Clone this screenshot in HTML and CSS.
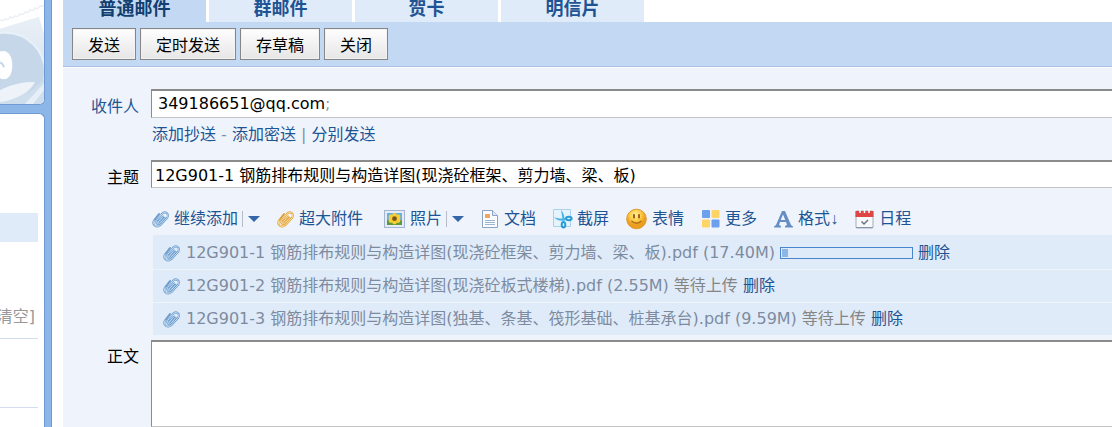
FILE: index.html
```html
<!DOCTYPE html>
<html lang="zh-CN">
<head>
<meta charset="utf-8">
<title>写邮件</title>
<link rel="stylesheet" href="styles.css">
</head>
<body>
<svg class="defs" aria-hidden="true">
  <symbol id="clip" viewBox="0 0 18 18">
    <g fill="none" stroke-linecap="round" stroke-linejoin="round">
      <path class="clip-back" d="M6.500 11.500 L11.200 6.500 M12.500 8 L8.500 12.800 C6 15.500 3 13 4.800 10.300 L9.800 4 C13 .5 17.300 3.500 15.300 7.500 L8.500 15 C4.500 18.500 -.3 15 2 10.500 L7 4"/>
      <path class="clip-front" d="M6.500 11.500 L11.200 6.500 M12.500 8 L8.500 12.800 C6 15.500 3 13 4.800 10.300 L9.800 4 C13 .5 17.300 3.500 15.300 7.500 L8.500 15 C4.500 18.500 -.3 15 2 10.500"/>
    </g>
  </symbol>
</svg>
<div class="app">
  <aside class="sidebar">
    <div class="panel art">
      <svg viewBox="0 0 44 105" preserveAspectRatio="none" aria-hidden="true">
        <defs><linearGradient id="sky" x1="0" y1="0" x2="0" y2="1"><stop offset="0" stop-color="#e9eff6"/><stop offset="1" stop-color="#d3e0ee"/></linearGradient></defs>
        <rect width="44" height="105" fill="#fff"/>
        <path d="M0 29 L39 17 L44 34 V105 H0Z" fill="url(#sky)"/>
        <path d="M0 20 q3 2 5 -1 q3 2 5 -2 q3 2 5 -1 q3 2 5 -2 q3 2 5 -2 q3 2 5 -2 q3 2 5 -2 q3 2 5 -2 q2 1 4 -1" fill="none" stroke="#eceff3" stroke-width="1.500"/>
        <circle cx="5" cy="73" r="40" fill="#c6d7e9" stroke="#e8f0f8" stroke-width="2"/>
        <path d="M0 52 C8 49 14 58 12 70 C11 79 5 82 0 79" fill="#fff"/>
        <path d="M0 63 q3 1 4 5" fill="none" stroke="#c6d7e9" stroke-width="2"/>
        <path d="M0 93 C14 84 24 82 35 83 L27 96 L44 80 V105 H0Z" fill="#cfdeed"/>
        <path d="M0 103 C14 101 28 95 35 83 C23 82 10 86 0 91Z" fill="#edf3f9"/>
        <path d="M25 105 L44 84 V91 L33 105Z" fill="#e6eef7"/>
      </svg>
    </div>
    <div class="panel folders">
      <div class="folder-active"></div>
      <a class="clear" href="#">[清空]</a>
      <hr>
      <hr class="second">
    </div>
  </aside>
  <main class="main">
    <nav class="tabs">
      <a class="tab active" href="#">普通邮件</a>
      <a class="tab" href="#">群邮件</a>
      <a class="tab" href="#">贺卡</a>
      <a class="tab" href="#">明信片</a>
    </nav>
    <div class="actions">
      <button type="button">发送</button>
      <button type="button">定时发送</button>
      <button type="button">存草稿</button>
      <button type="button">关闭</button>
    </div>
    <form class="compose">
      <label class="label link" for="to">收件人</label>
      <div class="field to"><input id="to" class="address" value="349186651@qq.com"><span class="semi">;</span></div>
      <div class="extras"><a href="#">添加抄送</a> - <a href="#">添加密送</a> | <a href="#">分别发送</a></div>
      <label class="label" for="subject">主题</label>
      <input id="subject" class="field subject" value="12G901-1 钢筋排布规则与构造详图(现浇砼框架、剪力墙、梁、板)">
      <div class="tools">
        <div class="tool"><svg class="i18" viewBox="0 0 18 18"><use href="#clip"/></svg><a href="#">继续添加</a><button class="drop" type="button" aria-label="更多添加方式"></button></div>
        <div class="tool"><svg class="i18 gold" viewBox="0 0 18 18"><use href="#clip"/></svg><a href="#">超大附件</a></div>
        <div class="tool photo">
          <svg class="i22" viewBox="0 0 22 20"><rect x=".5" y="1.500" width="20" height="17" fill="#e4ebf6" stroke="#a3b5d1"/><rect x="3" y="4" width="15" height="12" fill="#6bb0dc"/><path d="M3 11 h15 v5 h-15z" fill="#5a9a3c"/><g fill="#f8ce35"><circle cx="10.500" cy="6.500" r="2.400"/><circle cx="14" cy="8" r="2.400"/><circle cx="14" cy="11.500" r="2.400"/><circle cx="10.500" cy="13" r="2.400"/><circle cx="7" cy="11.500" r="2.400"/><circle cx="7" cy="8" r="2.400"/></g><circle cx="10.500" cy="9.700" r="2.400" fill="#7d5518"/></svg>
          <a href="#">照片</a><button class="drop" type="button" aria-label="更多照片选项"></button></div>
        <div class="tool">
          <svg class="i19" viewBox="0 0 19 20"><path d="M1.500 1.500 h10 l5 5 v12 h-15z" fill="#fafcff" stroke="#8da3c4"/><path d="M11.500 1.500 v5 h5" fill="#dce6f4" stroke="#8da3c4"/><rect x="4" y="5" width="5" height="4" fill="#f1a45c"/><path d="M4 11.500h10M4 13.500h10M4 15.500h10" stroke="#9db4d3"/></svg>
          <a href="#">文档</a></div>
        <div class="tool">
          <svg class="i20" viewBox="0 0 20 20"><path d="M.5 .5h17v17h-17z" fill="#e4f3fc" stroke="#a9d2ec"/><path d="M8 1 C10 3 11.500 6 11.500 11 L9.500 11 C9.500 8 8.500 5 8 1Z M1 8 C4 9.500 8 10 12 9 L12 11.500 C7 12.500 3 11 1 8Z" fill="#48b4e6"/><g fill="none" stroke="#279bd5" stroke-width="2"><ellipse cx="15.800" cy="9.500" rx="2.800" ry="1.800"/><ellipse cx="10.500" cy="15.800" rx="1.800" ry="2.800"/></g></svg>
          <a href="#">截屏</a></div>
        <div class="tool">
          <svg class="i22" viewBox="0 0 22 22"><defs><radialGradient id="face" cx=".45" cy=".3"><stop offset="0" stop-color="#fff09a"/><stop offset=".6" stop-color="#fbcb44"/><stop offset="1" stop-color="#ec9e20"/></radialGradient></defs><circle cx="10.500" cy="11" r="9.800" fill="url(#face)" stroke="#dd9830"/><path d="M8 7v2.500M13 7v2.500" stroke="#a0601a" stroke-width="2" stroke-linecap="round"/><path d="M5.500 13q5 4.500 10 0" fill="none" stroke="#b26d1c" stroke-width="1.500"/></svg>
          <a href="#">表情</a></div>
        <div class="tool">
          <svg class="i20" viewBox="0 0 20 20"><rect x="1" y="1" width="8" height="8" rx="1" fill="#6c9fee"/><rect x="10.500" y="1" width="8" height="8" rx="1" fill="#ffd466"/><rect x="1" y="10.500" width="8" height="8" rx="1" fill="#ffd466"/><rect x="10.500" y="10.500" width="8" height="8" rx="1" fill="#6c9fee"/></svg>
          <a href="#">更多</a></div>
        <div class="tool">
          <svg class="i20" viewBox="0 0 20 20"><path d="M0 17.500 L2 16 L8 2 H11 L17 16 L19 17.500 V18.500 H11 V17 L13 16 L12 13 H6 L5 16 L7 17 V18.500 H0Z M6.700 11 H11.300 L9 5.500Z" fill="#658fc4" fill-rule="evenodd"/></svg>
          <a href="#">格式<span class="arrow">↓</span></a></div>
        <div class="tool">
          <svg class="i20" viewBox="0 0 20 20"><rect x="1" y="2" width="17" height="17" rx="1" fill="#f7f8fa" stroke="#a5adba"/><path d="M.5 2h18v6h-18z" fill="#df4545"/><path d="M5 0v4M9.500 0v4M14 0v4" stroke="#fff" stroke-width="1.500"/><path d="M1 18.500h17" stroke="#8795ac"/><path d="M6.500 12.500 l2.500 2.500 l4 -4" fill="none" stroke="#67758b" stroke-width="1.500"/></svg>
          <a href="#">日程</a></div>
      </div>
      <ul class="files">
        <li><svg class="i18" viewBox="0 0 18 18"><use href="#clip"/></svg><span>12G901-1 钢筋排布规则与构造详图(现浇砼框架、剪力墙、梁、板).pdf (17.40M)</span><span class="progress" role="progressbar" aria-valuenow="5"><i style="width:5%"></i></span><a href="#">删除</a></li>
        <li><svg class="i18" viewBox="0 0 18 18"><use href="#clip"/></svg><span>12G901-2 钢筋排布规则与构造详图(现浇砼板式楼梯).pdf (2.55M)</span><span class="wait">等待上传</span><a href="#">删除</a></li>
        <li><svg class="i18" viewBox="0 0 18 18"><use href="#clip"/></svg><span>12G901-3 钢筋排布规则与构造详图(独基、条基、筏形基础、桩基承台).pdf (9.59M)</span><span class="wait">等待上传</span><a href="#">删除</a></li>
      </ul>
      <label class="label body-label" for="body">正文</label>
      <textarea id="body" class="field body"></textarea>
    </form>
  </main>
</div>
</body>
</html>
```

FILE: styles.css
```css
* { box-sizing: border-box; }
body { margin: 0; overflow: hidden; background: #fff; color: #000; font: 16px/20px "DejaVu Sans", "Noto Sans CJK SC", sans-serif; }
input, textarea, button { font: inherit; color: inherit; }
a { color: #1e5494; text-decoration: none; }
.defs { display: none; }
.app { display: flex; height: 100vh; }

.sidebar { width: 52px; flex: none; display: flex; flex-direction: column; gap: 8px; padding-right: 6px; background: #8cb5e8; border-right: 1px solid #7298cc; }
.panel { background: #fff; border-right: 1px solid #6f9ad3; overflow: hidden; }
.art { height: 105px; flex: none; border-bottom: 1px solid #6f9ad3; border-radius: 0 0 6px 0; }
.art svg { display: block; width: 100%; height: 100%; }
.folders { flex: 1; border-top: 1px solid #6f9ad3; border-radius: 0 6px 0 0; padding: 99px 6px 0 0; }
.folder-active { height: 29px; background: #e0ebf9; }
.clear { display: flex; justify-content: flex-end; margin: 65px 3px 11px 0; color: #999; white-space: nowrap; }
.folders hr { margin: 0; border: 0; border-top: 1px solid #d4dded; }
.folders .second { margin-top: 68px; }

.main { flex: 1; min-width: 0; margin-left: 11px; display: flex; flex-direction: column; background: #eff4fc; }
.tabs { display: flex; gap: 3px; height: 22px; background: #fff; }
.tab { width: 143px; background: #e0ebf9; text-align: center; font-size: 18px; font-weight: bold; line-height: 18px; }
.tab.active { background: #c3d9f3; color: #123e70; }
.actions { display: flex; gap: 4px; padding: 6px 9px; background: #c3d9f3; border-bottom: 1px solid #a9c2e4; box-shadow: 0 1px #fff; }
.actions button { height: 32px; padding: 4px 15px 0; border: 1px solid #868686; border-radius: 0; background: linear-gradient(#fefefe, #e6e6e6); box-shadow: inset 0 0 0 1px #f2f2f2; white-space: nowrap; }

.compose { flex: 1; display: grid; grid-template-columns: 76px minmax(0, 1fr); grid-template-rows: auto auto auto auto auto 1fr; column-gap: 12px; padding-top: 22px; }
.label { padding-top: 8px; text-align: right; }
.link { color: #1e5494; }
.field { width: 100%; height: 29px; background: #fff; border: 1px solid #c3c3c3; border-top: 2px solid #8b8b8b; border-left-color: #8b8b8b; border-right: 0; border-radius: 0; outline: 0; }
.to { display: flex; align-items: center; padding: 0 6px; }
.address { width: 167px; padding: 0; border: 0; outline: 0; }
.semi { color: #999; }
.extras { grid-column: 2; padding: 7px 0 15px 1px; color: #8291a9; }
.subject { height: 28px; padding: 0 3px 2px; }
.tools { grid-column: 2; display: flex; align-items: center; gap: 17px; height: 47px; padding: 14px 0 0 1px; white-space: nowrap; }
.tool { display: flex; align-items: center; gap: 4px; flex: none; }
.photo { margin-left: 4px; }
.arrow { font-family: "Liberation Sans", sans-serif; }
.drop { width: 18px; height: 16px; padding: 0 0 0 5px; border: 0; border-left: 1px solid #b5bdca; background: none; }
.drop::before { content: ""; display: block; border: 6px solid transparent; border-top-color: #3566aa; border-bottom: 0; }
.i18 { width: 18px; height: 18px; flex: none; }
.i19 { width: 19px; height: 20px; flex: none; }
.i20 { width: 20px; height: 20px; flex: none; }
.i22 { width: 22px; height: 22px; flex: none; }
.clip-back { stroke: var(--clip, #6a9bcc); stroke-width: 2; }
.clip-front { stroke: var(--shine, #c2dcf2); stroke-width: 1; }
.gold { --clip: #e0a03a; --shine: #ffe2a0; }
.files { grid-column: 2; display: grid; gap: 1px; margin: 0 0 5px; padding: 0 0 0 2px; list-style: none; }
.files li { display: flex; align-items: center; gap: 5px; height: 32px; padding-left: 10px; background: #e0ebf9; color: #7d8ba0; white-space: nowrap; }
.files li:first-child { height: 34px; padding-top: 1px; }
.wait { color: #858585; }
.progress { width: 133px; height: 12px; padding: 1px; border: 1px solid #4985cc; }
.progress i { display: block; height: 100%; background: #8cb5e8; }
.body-label { padding-top: 7px; }
.body { height: 100%; resize: none; }
```
